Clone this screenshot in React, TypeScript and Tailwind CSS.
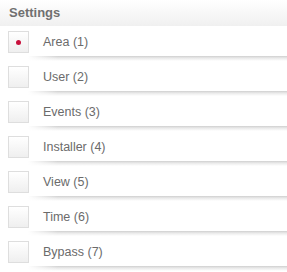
import React from 'react';

const items = ['Area (1)', 'User (2)', 'Events (3)', 'Installer (4)', 'View (5)', 'Time (6)', 'Bypass (7)'];

const Row = ({ label, checked }: { label: string; checked?: boolean }) => (
  <div className="flex flex-col pt-[5px] h-[35px]">
    <div className="flex items-center h-[22px]">
      <div className="ml-[8px] w-[21px] h-[22px] border border-[#dedede] bg-gradient-to-b from-white to-[#efefef] flex items-center justify-center">
        {checked && <div className="w-[5px] h-[5px] rounded-full bg-[#c8103c]" />}
      </div>
      <span className="ml-[14px] text-[12.5px] text-[#6b6b6b]">{label}</span>
    </div>
    <div className="mt-[3px] ml-[28px] h-[5px] bg-[linear-gradient(to_right,white,transparent_30px),linear-gradient(to_bottom,#cfcfcf,#e9e9e9_40%,#ffffff)]" />
  </div>
);

export default function App() {
  return (
    <div className="w-[287px] h-[272px] bg-white overflow-hidden" style={{ fontFamily: '"Liberation Sans", Arial, sans-serif' }}>
      <div className="h-[26px] bg-gradient-to-b from-white to-[#f0f0f0] flex items-center px-[9px]">
        <span className="text-[13px] font-bold text-[#707070]">Settings</span>
      </div>
      {items.map((label, i) => (
        <Row key={label} label={label} checked={i === 0} />
      ))}
    </div>
  );
}
